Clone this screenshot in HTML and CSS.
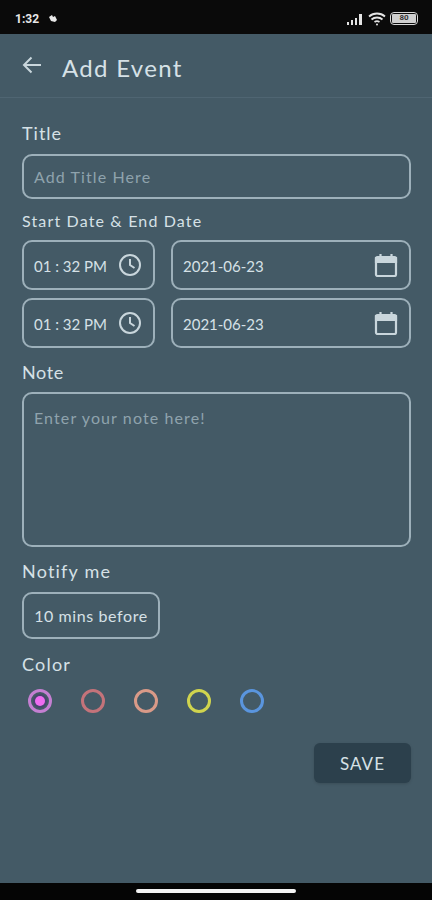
FILE: index.html
```html
<!DOCTYPE html>
<html lang="en">
<head>
    <meta charset="UTF-8">
    <meta name="viewport" content="width=device-width, initial-scale=1.0">
    <title>Add Event</title>
    <link rel="stylesheet" href="styles.css">
</head>
<body>
    <div class="screen">
        <div class="status-bar">
            <div class="status-left">
                <span class="status-time">1:32</span>
                <svg class="status-moon" width="10" height="10" viewBox="0 0 10 10"><path d="M1 3 L4 1 L5 3 L7 2 L9 6 L7 8 L3 7 Z" fill="#e8e8e8"/></svg>
            </div>
            <div class="status-right">
                <svg width="18" height="12" viewBox="0 0 18 12"><path d="M1 9h2v3H1zM5 7h2v5H5zM9 5h2v7H9zM13 1h3v11h-3z" fill="#e4e4e4"/></svg>
                <svg width="18" height="14" viewBox="0 0 18 14" fill="none" stroke="#e4e4e4" stroke-width="1.8"><path d="M1 4.500C5.500 .5 12.500 .5 17 4.500"/><path d="M3.500 7.500C6.500 4.800 11.500 4.800 14.500 7.500"/><path d="M6.500 10C8 9 10 9 11.500 10"/><circle cx="9" cy="12.500" r="1" fill="#e4e4e4" stroke="none"/></svg>
                <div class="battery"><span class="battery-level">80</span></div>
            </div>
        </div>

        <header class="app-bar">
            <svg class="back-icon" width="20" height="18" viewBox="0 0 20 18" fill="none" stroke="#c9d6dc" stroke-width="2"><path d="M19 9H2"/><path d="M9.500 1.500L2 9l7.500 7.500"/></svg>
            <h1>Add Event</h1>
        </header>

        <main class="form">
            <label class="label label-title">Title</label>
            <div class="field field-title placeholder">Add Title Here</div>

            <label class="label label-small">Start Date &amp; End Date</label>
            <div class="date-grid">
                <div class="field field-date">
                    <span>01 : 32 PM</span>
                    <svg width="24" height="24" viewBox="0 0 24 24" fill="none" stroke="#c9d6dc" stroke-width="2"><circle cx="12" cy="12" r="10"/><path d="M12 6v6l4.500 3"/></svg>
                </div>
                <div class="field field-date">
                    <span>2021-06-23</span>
                    <svg width="24" height="24" viewBox="0 0 24 24" fill="none" stroke="#c9d6dc" stroke-width="2.200"><rect x="2" y="4" width="20" height="19" rx="1.500"/><path d="M2 5h20v4H2z" fill="#c9d6dc"/><path d="M6.500 1v4M17.500 1v4"/></svg>
                </div>
                <div class="field field-date">
                    <span>01 : 32 PM</span>
                    <svg width="24" height="24" viewBox="0 0 24 24" fill="none" stroke="#c9d6dc" stroke-width="2"><circle cx="12" cy="12" r="10"/><path d="M12 6v6l4.500 3"/></svg>
                </div>
                <div class="field field-date">
                    <span>2021-06-23</span>
                    <svg width="24" height="24" viewBox="0 0 24 24" fill="none" stroke="#c9d6dc" stroke-width="2.200"><rect x="2" y="4" width="20" height="19" rx="1.500"/><path d="M2 5h20v4H2z" fill="#c9d6dc"/><path d="M6.500 1v4M17.500 1v4"/></svg>
                </div>
            </div>

            <label class="label label-note">Note</label>
            <div class="field field-note placeholder">Enter your note here!</div>

            <label class="label label-notify">Notify me</label>
            <div class="field field-notify">10 mins before</div>

            <label class="label label-color">Color</label>
            <div class="colors">
                <span class="color color-purple selected"></span>
                <span class="color color-red"></span>
                <span class="color color-salmon"></span>
                <span class="color color-yellow"></span>
                <span class="color color-blue"></span>
            </div>

            <div class="actions">
                <button class="save-button">SAVE</button>
            </div>
        </main>

        <div class="nav-bar"><span class="home-indicator"></span></div>
    </div>
</body>
</html>
```

FILE: styles.css
```css
:root {
    --background-color: #445a66;
    --border-color: #9db0ba;
    --text-primary: #d6e1e6;
    --text-muted: #8fa3ad;
}

* {
    margin: 0;
    padding: 0;
    box-sizing: border-box;
}

body {
    font-family: 'Lato', 'Noto Sans', sans-serif;
    background-color: var(--background-color);
    color: var(--text-primary);
}

.screen {
    width: 432px;
    height: 900px;
    display: flex;
    flex-direction: column;
    overflow: hidden;
}

.status-bar {
    height: 34px;
    background: #0a0a0a;
    display: flex;
    justify-content: space-between;
    align-items: center;
    padding: 3px 14px 0 15px;
    flex-shrink: 0;
}

.status-left {
    display: flex;
    align-items: center;
    gap: 9px;
}

.status-time {
    font-family: 'Roboto', sans-serif;
    font-size: 12px;
    font-weight: 700;
    color: #e8e8e8;
}

.status-right {
    display: flex;
    align-items: center;
    gap: 4px;
}

.battery {
    width: 28px;
    height: 13px;
    border: 1.500px solid #d8d8d8;
    border-radius: 4px;
    display: flex;
    align-items: center;
    justify-content: center;
    padding: 1px;
}

.battery-level {
    width: 100%;
    height: 100%;
    background: #cfcfcf;
    color: #333;
    font-family: 'Roboto', sans-serif;
    font-size: 8px;
    font-weight: 700;
    line-height: 8px;
    text-align: center;
    border-radius: 1px;
}

.app-bar {
    height: 64px;
    display: flex;
    align-items: center;
    padding: 4px 22px 0;
    border-bottom: 1px solid #4f6572;
    flex-shrink: 0;
}

.back-icon {
    margin-top: -6px;
}

.app-bar h1 {
    font-size: 24px;
    font-weight: 400;
    letter-spacing: 1.300px;
    margin-left: 20px;
}

.form {
    flex: 1;
    padding: 24px 21px 0 22px;
    display: flex;
    flex-direction: column;
}

.label {
    display: block;
    font-size: 18px;
    line-height: 22px;
    letter-spacing: 1px;
}

.label-small {
    font-size: 16px;
    line-height: 20px;
    letter-spacing: 1.150px;
    margin-top: 12px;
}

.label-title {
    margin-bottom: 10px;
}

.label-note {
    margin-top: 13px;
    letter-spacing: 0.600px;
}

.label-notify {
    margin-top: 13px;
    letter-spacing: 1.200px;
}

.label-color {
    margin-top: 14px;
    letter-spacing: 1.200px;
}

.field {
    border: 2px solid var(--border-color);
    border-radius: 10px;
    font-size: 16px;
    letter-spacing: 0.600px;
}

.placeholder {
    color: var(--text-muted);
    letter-spacing: 1.100px;
}

.field-title {
    height: 45px;
    display: flex;
    align-items: center;
    padding: 0 10px;
}

.date-grid {
    display: grid;
    grid-template-columns: 133px 240px;
    column-gap: 16px;
    row-gap: 8px;
    margin-top: 9px;
}

.field-date {
    height: 50px;
    display: flex;
    align-items: center;
    justify-content: space-between;
    padding: 0 11px 0 10px;
    font-size: 15px;
    letter-spacing: 0;
    white-space: nowrap;
}

.field-date span {
    margin-top: 1px;
}

.field-note {
    height: 155px;
    margin-top: 9px;
    padding: 14px 10px;
}

.field-notify {
    width: 138px;
    height: 47px;
    margin-top: 10px;
    display: flex;
    align-items: center;
    justify-content: center;
}

.colors {
    display: flex;
    gap: 29px;
    margin-top: 14px;
    padding-left: 6px;
}

.color {
    width: 24px;
    height: 24px;
    border-radius: 50%;
    border: 3px solid;
    display: flex;
    align-items: center;
    justify-content: center;
}

.color-purple { border-color: #c47fd2; }
.color-red { border-color: #c4737a; }
.color-salmon { border-color: #d99a88; }
.color-yellow { border-color: #d0d44e; }
.color-blue { border-color: #5a95de; }

.color.selected::after {
    content: "";
    width: 10px;
    height: 10px;
    border-radius: 50%;
    background: #ee6cf0;
    box-shadow: 0 0 0 2px #4a4470;
}

.actions {
    display: flex;
    justify-content: flex-end;
    margin-top: 30px;
}

.save-button {
    width: 97px;
    height: 40px;
    background: #2c404c;
    color: var(--text-primary);
    border: none;
    border-radius: 6px;
    font-family: inherit;
    font-size: 17px;
    letter-spacing: 1px;
    box-shadow: 0 1px 3px rgba(0, 0, 0, 0.15);
}

.nav-bar {
    height: 17px;
    background: #050505;
    display: flex;
    justify-content: center;
    padding-top: 6px;
    flex-shrink: 0;
}

.home-indicator {
    width: 160px;
    height: 4px;
    background: #f4f4f4;
    border-radius: 2px;
}
```
